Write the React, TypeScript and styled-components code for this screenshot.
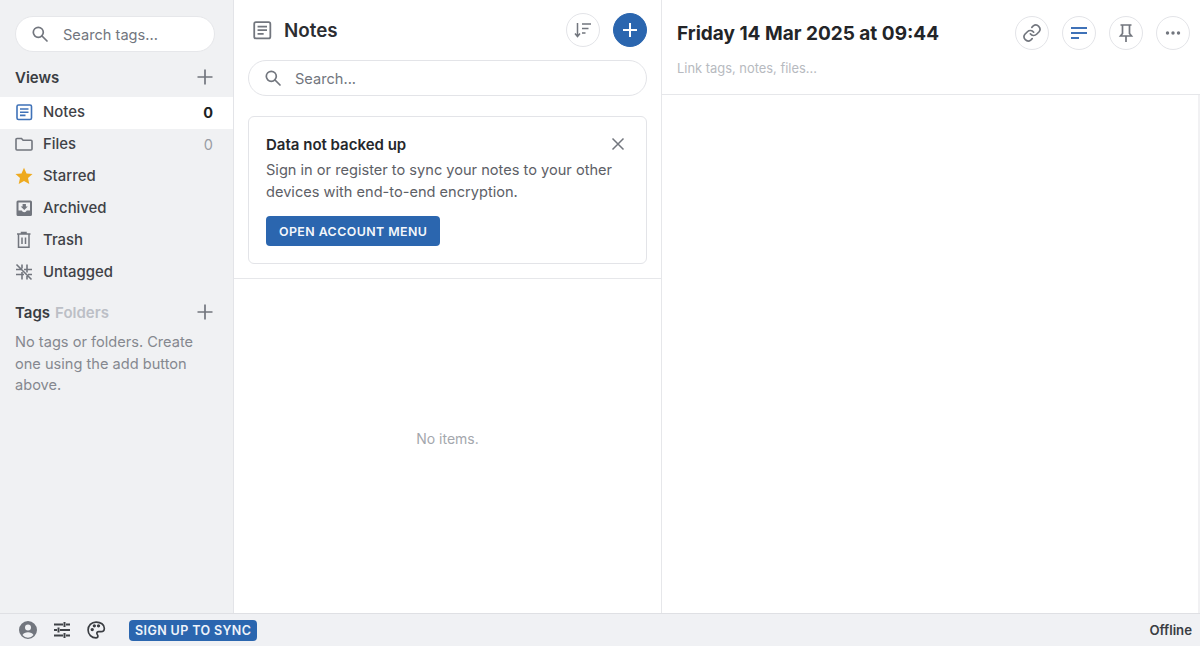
import React from "react";
import styled, { createGlobalStyle } from "styled-components";

const Global = createGlobalStyle`
  html, body { margin: 0; padding: 0; height: 100%; background: #fff; }
  body { font-family: Inter, "Liberation Sans", sans-serif; overflow: hidden; -webkit-font-smoothing: antialiased; }
  * { box-sizing: border-box; }
`;

const Page = styled.div`
  width: 1200px; height: 646px; display: flex; flex-direction: column; overflow: hidden;
`;
const Main = styled.div`
  flex: 1; display: flex; min-height: 0;
`;
const Sidebar = styled.aside`
  width: 234px; background: #f0f1f3; border-right: 1px solid #e3e4e8; padding-top: 16px;
  display: flex; flex-direction: column;
`;
const TagSearch = styled.div`
  margin: 0 18px 0 15px; height: 36px; border-radius: 18px; background: #fff; border: 1px solid #e6e7ea;
  display: flex; align-items: center; padding-left: 15px; gap: 14px; color: #72767e; font-size: 14.6px;
`;
const SearchText = styled.span`
  margin-top: 2px;
`;
const SectionHead = styled.div<{ $top: number }>`
  display: flex; align-items: center; justify-content: space-between;
  margin-top: ${p => p.$top}px; padding: 0 20px 0 15px; height: 24px;
  font-size: 15px; font-weight: 600; color: #3a3d42;
`;
const Muted = styled.span`
  color: #bcbfc6; margin-left: 5px;
`;
const Plus = styled.span`
  display: flex; color: #72767e;
`;
const Views = styled.div`
  margin-top: 8px; display: flex; flex-direction: column;
`;
const Row = styled.div<{ $active?: boolean }>`
  height: 32px; display: flex; align-items: center; padding: 0 20px 2px 15px;
  background: ${p => (p.$active ? "#fff" : "transparent")};
  font-size: 14.9px; font-weight: 500; color: #3f4247;
`;
const RowIcon = styled.span`
  width: 28px; display: flex; align-items: center;
`;
const RowLabel = styled.span`
  flex: 1;
`;
const Count = styled.span<{ $strong?: boolean }>`
  font-size: 14.5px; color: ${p => (p.$strong ? "#1d1f23" : "#9a9da4")}; font-weight: ${p => (p.$strong ? 700 : 400)};
`;
const EmptyTags = styled.p`
  margin: 8px 30px 0 15px; font-size: 14.6px; line-height: 21.5px; color: #85888f;
`;

const NotesCol = styled.section`
  width: 428px; border-right: 1px solid #e6e7ea; display: flex; flex-direction: column;
`;
const NotesTop = styled.div`
  padding: 13px 14px 14px 14px; border-bottom: 1px solid #e6e7ea;
`;
const NotesTitleRow = styled.div`
  height: 34px; display: flex; align-items: center; padding-left: 4px; gap: 13px;
`;
const NotesTitle = styled.h1`
  margin: 0 0 0 -1px; flex: 1; font-size: 18.8px; font-weight: 600; color: #2b2d31;
`;
const CircleBtn = styled.button<{ $fill?: boolean }>`
  width: 34px; height: 34px; padding: 0; border-radius: 50%;
  border: 1px solid ${p => (p.$fill ? "#2b66af" : "#e3e4e8")};
  background: ${p => (p.$fill ? "#2b66af" : "#fff")};
  display: flex; align-items: center; justify-content: center; flex: none;
`;
const NoteSearch = styled.div`
  margin-top: 13px; height: 36px; border-radius: 18px; border: 1px solid #e3e4e8; background: #fff;
  display: flex; align-items: center; padding-left: 15px; gap: 13px; color: #72767e; font-size: 14.6px;
`;
const Card = styled.div`
  position: relative; margin-top: 20px; height: 148px; border: 1px solid #e3e4e8; border-radius: 6px; padding: 18px 17px;
`;
const CardTitle = styled.h2`
  margin: 0; font-size: 15px; line-height: 20px; font-weight: 600; color: #25272b;
`;
const CardText = styled.p`
  margin: 5px 0 0; font-size: 14.6px; line-height: 21.5px; color: #5d6066; width: 360px;
`;
const Primary = styled.button`
  margin-top: 13px; height: 30px; padding: 0 13px; border: 0; border-radius: 4px; background: #2b66af; color: #f4f7fb;
  font: 600 12.4px Inter, "Liberation Sans", sans-serif; letter-spacing: 0.42px; display: block;
`;
const Close = styled.span`
  position: absolute; top: 20px; right: 21px; display: flex; color: #72767e;
`;
const NoItems = styled.div`
  flex: 1; display: flex; align-items: center; justify-content: center; padding-bottom: 16px; font-size: 14px; color: #a4a7ad;
`;

const Editor = styled.section`
  flex: 1; display: flex; flex-direction: column;
`;
const EditorHead = styled.header`
  height: 95px; border-bottom: 1px solid #e6e7ea; padding: 16px 10px 0 15px; display: flex; justify-content: space-between;
`;
const TitleWrap = styled.div`
  display: flex; flex-direction: column;
`;
const EditorTitle = styled.h2`
  margin: 6px 0 0; font-size: 19px; line-height: 24px; font-weight: 700; color: #232528;
`;
const LinkHint = styled.span`
  margin-top: 15px; font-size: 12.9px; color: #b7bac0;
`;
const Actions = styled.div`
  display: flex; gap: 13px;
`;
const EditorBody = styled.div`
  flex: 1; border-right: 2px solid #f1f1f3;
`;

const Footer = styled.footer`
  height: 33px; background: #f0f1f4; border-top: 1px solid #dfe0e4; display: flex; align-items: center; padding: 0 8px 0 18px;
`;
const FootIcons = styled.div`
  display: flex; align-items: center; gap: 14px; color: #5f6268;
`;
const SyncBtn = styled.button`
  margin-left: 23px; height: 21px; padding: 0 6px; border: 0; border-radius: 4px; background: #2b66af; color: #eef3fa;
  font: 600 12.5px Inter, "Liberation Sans", sans-serif; letter-spacing: 0.4px;
`;
const Offline = styled.span`
  margin-left: auto; font-size: 13.2px; font-weight: 600; color: #3a3d42;
`;

const SearchIcon = () => (
  <svg width="18" height="18" viewBox="0 0 18 18" fill="none" stroke="#72767e" strokeWidth="1.7" strokeLinecap="round">
    <circle cx="7.3" cy="7.3" r="5" /><path d="M11 11l5 5" />
  </svg>
);
const PlusIcon = () => (
  <svg width="16" height="16" viewBox="0 0 16 16" stroke="currentColor" strokeWidth="1.7"><path d="M8 .5v15M.5 8h15" /></svg>
);
const NoteIcon = ({ color, size = 18 }: { color: string; size?: number }) => (
  <svg width={size} height={size} viewBox="0 0 18 18" fill="none" stroke={color} strokeWidth="1.6">
    <rect x="2" y="2" width="14.5" height="14.5" rx="1.5" />
    <path d="M5 6h8.5M5 9.2h8.5M5 12.4h5.5" />
  </svg>
);

export default function App() {
  return (
    <Page>
      <Global />
      <Main>
        <Sidebar>
          <TagSearch><SearchIcon /><SearchText>Search tags...</SearchText></TagSearch>
          <SectionHead $top={13}>Views<Plus><PlusIcon /></Plus></SectionHead>
          <Views>
            <Row $active><RowIcon><NoteIcon color="#3f72b8" /></RowIcon><RowLabel>Notes</RowLabel><Count $strong>0</Count></Row>
            <Row>
              <RowIcon>
                <svg width="18" height="16" viewBox="0 0 18 16" fill="none" stroke="#72767e" strokeWidth="1.6"><path d="M1 3.500a1 1 0 0 1 1-1h4.500l1.600 1.800H16a1 1 0 0 1 1 1V13a1 1 0 0 1-1 1H2a1 1 0 0 1-1-1z" /></svg>
              </RowIcon>
              <RowLabel>Files</RowLabel><Count>0</Count>
            </Row>
            <Row>
              <RowIcon>
                <svg width="18" height="18" viewBox="0 0 18 18"><path fill="#eeaa1f" d="M9 .8l2.500 5.600 6 .6-4.500 4 1.300 6L9 14l-5.300 3 1.300-6-4.500-4 6-.6z" /></svg>
              </RowIcon>
              <RowLabel>Starred</RowLabel>
            </Row>
            <Row>
              <RowIcon>
                <svg width="18" height="18" viewBox="0 0 18 18"><path fill="#72767e" fillRule="evenodd" d="M3 1.500h12.500A1.500 1.500 0 0 1 17 3v12.500a1.500 1.500 0 0 1-1.500 1.500H3a1.500 1.500 0 0 1-1.500-1.500V3A1.500 1.500 0 0 1 3 1.500zM3.500 3.500v8h3.200a2.800 2.800 0 0 0 5.100 0H15v-8zM7.600 5h3.300v2.500h1.900l-3.550 3.500-3.550-3.500h1.900z" /></svg>
              </RowIcon>
              <RowLabel>Archived</RowLabel>
            </Row>
            <Row>
              <RowIcon>
                <svg width="18" height="18" viewBox="0 0 18 18" fill="none" stroke="#72767e" strokeWidth="1.5"><path d="M2 3h13.500M6.500 3V1.500h4.500V3M3.500 3v13.200h10.500V3M7 6.500v6.500M10.500 6.500v6.500" /></svg>
              </RowIcon>
              <RowLabel>Trash</RowLabel>
            </Row>
            <Row>
              <RowIcon>
                <svg width="18" height="18" viewBox="0 0 18 18" fill="none" stroke="#72767e" strokeWidth="1.6"><path d="M1.500 1.500l15 15M7 1.500v4M7 9v7.500M12 1.500v8M12 13v3.500M1 6.500h5M9 6.500h8M1 11.500h8M13 11.500h4" /></svg>
              </RowIcon>
              <RowLabel>Untagged</RowLabel>
            </Row>
          </Views>
          <SectionHead $top={11}><span>Tags<Muted>Folders</Muted></span><Plus><PlusIcon /></Plus></SectionHead>
          <EmptyTags>No tags or folders. Create one using the add button above.</EmptyTags>
        </Sidebar>

        <NotesCol>
          <NotesTop>
            <NotesTitleRow>
              <NoteIcon color="#72767e" size={20} />
              <NotesTitle>Notes</NotesTitle>
              <CircleBtn>
                <svg width="20" height="18" viewBox="0 0 20 18" fill="none" stroke="#72767e" strokeWidth="1.500"><path d="M4.500 2v13M2 12.500l2.500 3 2.500-3M9 3h9M9 7.500h6.500M9 12h3.500" /></svg>
              </CircleBtn>
              <CircleBtn $fill>
                <svg width="16" height="16" viewBox="0 0 16 16" stroke="#fff" strokeWidth="2"><path d="M8 1v14M1 8h14" /></svg>
              </CircleBtn>
            </NotesTitleRow>
            <NoteSearch><SearchIcon /><SearchText>Search...</SearchText></NoteSearch>
            <Card>
              <CardTitle>Data not backed up</CardTitle>
              <Close>
                <svg width="14" height="14" viewBox="0 0 14 14" stroke="currentColor" strokeWidth="1.500"><path d="M1.500 1.500l11 11M12.500 1.500l-11 11" /></svg>
              </Close>
              <CardText>Sign in or register to sync your notes to your other devices with end-to-end encryption.</CardText>
              <Primary>OPEN ACCOUNT MENU</Primary>
            </Card>
          </NotesTop>
          <NoItems>No items.</NoItems>
        </NotesCol>

        <Editor>
          <EditorHead>
            <TitleWrap>
              <EditorTitle>Friday 14 Mar 2025 at 09:44</EditorTitle>
              <LinkHint>Link tags, notes, files...</LinkHint>
            </TitleWrap>
            <Actions>
              <CircleBtn>
                <svg width="20" height="20" viewBox="0 0 24 24" fill="none" stroke="#72767e" strokeWidth="2" strokeLinecap="round"><path d="M10 13a5 5 0 0 0 7.500.5l3-3a5 5 0 0 0-7-7l-1.700 1.700" /><path d="M14 11a5 5 0 0 0-7.500-.5l-3 3a5 5 0 0 0 7 7l1.700-1.700" /></svg>
              </CircleBtn>
              <CircleBtn>
                <svg width="18" height="14" viewBox="0 0 18 14" stroke="#3f72b8" strokeWidth="2"><path d="M1 2h16M1 7h16M1 12h8" /></svg>
              </CircleBtn>
              <CircleBtn>
                <svg width="16" height="20" viewBox="0 0 16 20" fill="none" stroke="#72767e" strokeWidth="1.700"><path d="M2.500 2h11M4.500 2v8.500L2.500 13h11l-2-2.500V2M8 13v6" /></svg>
              </CircleBtn>
              <CircleBtn>
                <svg width="16" height="4" viewBox="0 0 16 4" fill="#72767e"><circle cx="2.500" cy="2" r="1.700" /><circle cx="8" cy="2" r="1.700" /><circle cx="13.500" cy="2" r="1.700" /></svg>
              </CircleBtn>
            </Actions>
          </EditorHead>
          <EditorBody />
        </Editor>
      </Main>
      <Footer>
        <FootIcons>
          <svg width="20" height="20" viewBox="0 0 20 20"><path fill="#72767e" fillRule="evenodd" d="M10 1a9 9 0 1 1 0 18 9 9 0 0 1 0-18zM10 4.500a3 3 0 1 0 0 6 3 3 0 0 0 0-6zM4.500 15a7 7 0 0 0 11 0c-1-1.700-3-2.700-5.500-2.700S5.500 13.300 4.500 15z" /></svg>
          <svg width="20" height="18" viewBox="0 0 20 18" stroke="#3f4247" strokeWidth="2" fill="none"><path d="M2 3.500h9M14 3.500h4M12.500 1v5M2 9h3M8 9h10M6.500 6.500v5M2 14.500h9M14 14.500h4M12.500 12v5" /></svg>
          <svg width="20" height="20" viewBox="0 0 24 24" fill="none" stroke="#3a3d42" strokeWidth="2"><path d="M12 2.500C6.500 2.500 2.500 6.700 2.500 12s4.200 9.500 9.500 9.500c1.500 0 2.300-1 2.300-2.200 0-1.500-1.300-2-1.300-3.300 0-1.200 1-2 2.200-2h2.800c2.300 0 4-1.700 4-4.200 0-4.300-4.500-7.300-9.500-7.300z" /><circle cx="7.500" cy="11.500" r="1" fill="#3a3d42" /><circle cx="10" cy="7" r="1" fill="#3a3d42" /><circle cx="15" cy="7" r="1" fill="#3a3d42" /></svg>
        </FootIcons>
        <SyncBtn>SIGN UP TO SYNC</SyncBtn>
        <Offline>Offline</Offline>
      </Footer>
    </Page>
  );
}
